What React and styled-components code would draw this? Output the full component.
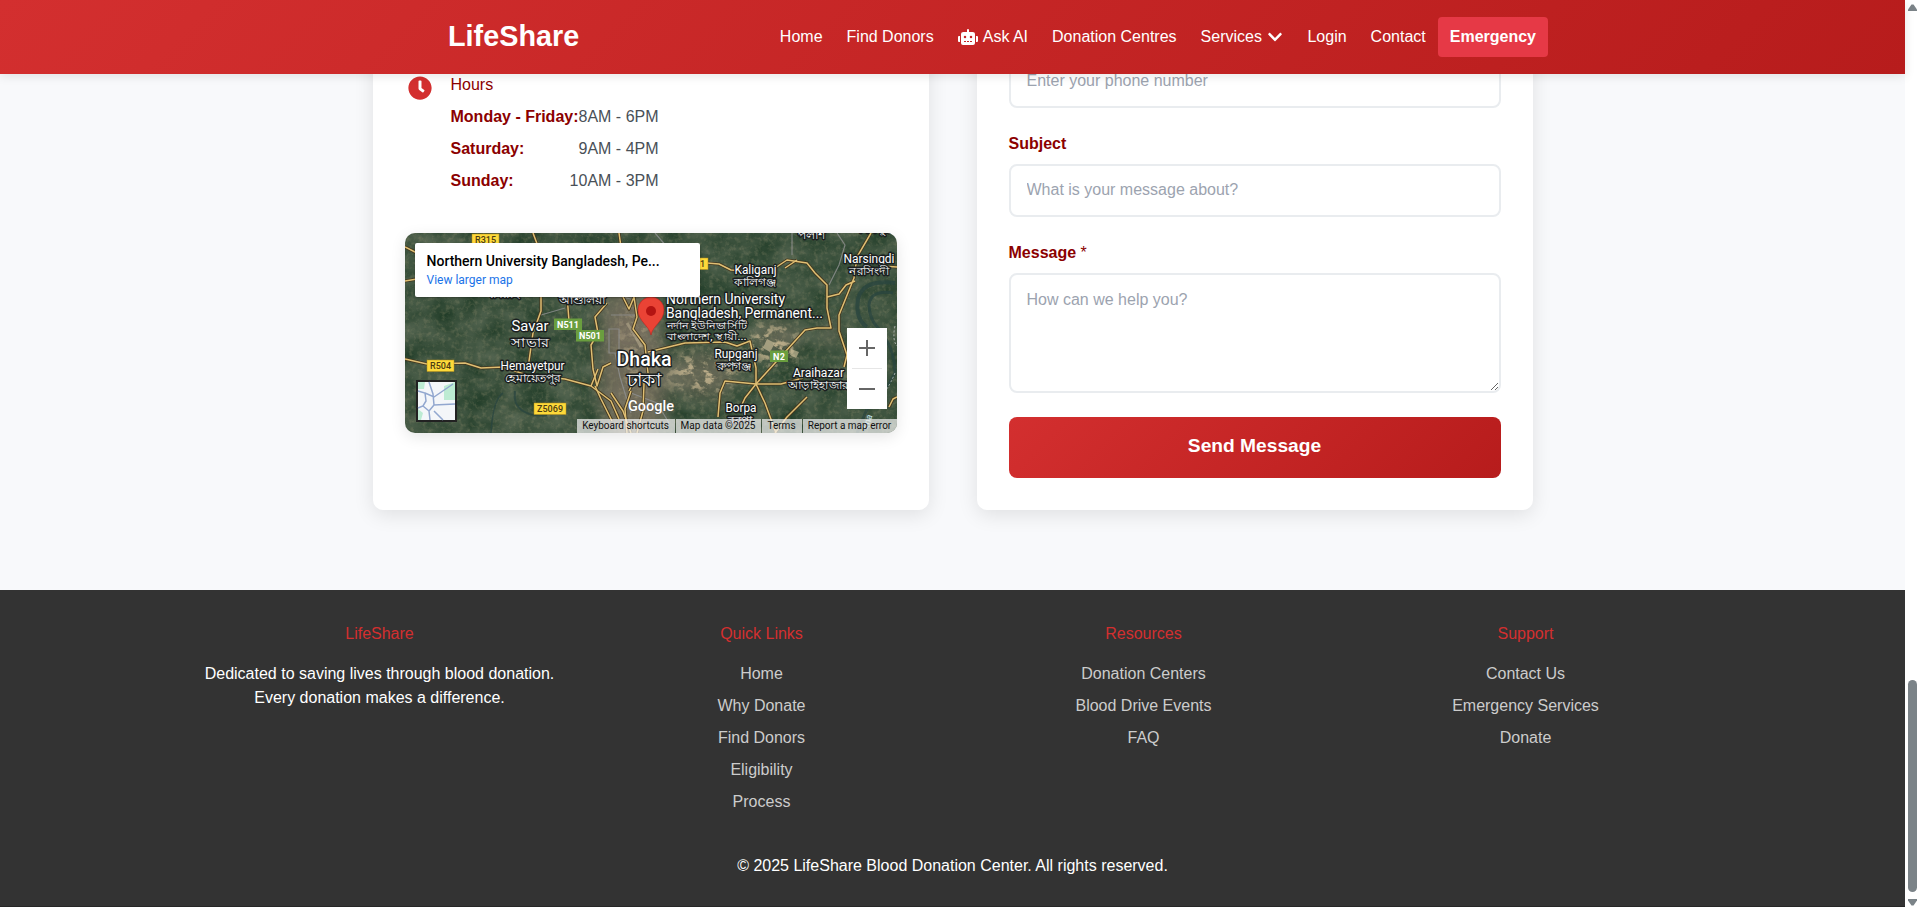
import React from "react";
import styled, { createGlobalStyle } from "styled-components";
import { FaClock, FaChevronDown, FaRobot } from "react-icons/fa";

const GlobalStyle = createGlobalStyle`
  *, *::before, *::after { box-sizing: border-box; }
  body {
    margin: 0;
    overflow: hidden;
    font-family: "Liberation Sans", Arial, sans-serif;
    font-size: 16px;
    line-height: 24px;
    background: #f8f9fa;
  }
  h3, h4, p, ul { margin: 0; padding: 0; font-weight: 400; font-size: 16px; }
  ul { list-style: none; }
  a { color: inherit; text-decoration: none; }
`;

const Screen = styled.div`
  display: flex;
  height: 907px;
  overflow: hidden;
`;

const Page = styled.div`
  display: flex;
  flex-direction: column;
  flex: 1;
  min-width: 0;
  background: #f8f9fb;
`;

const Header = styled.header`
  position: relative;
  z-index: 2;
  flex: none;
  display: flex;
  justify-content: space-between;
  align-items: center;
  height: 74px;
  padding: 0 357px 0 448px;
  color: #fff;
  background: linear-gradient(135deg, #d32f2f, #b71c1c);
  box-shadow: 0 2px 10px rgba(0, 0, 0, 0.1);
`;

const Logo = styled.a`
  font-size: 28.8px;
  line-height: 40px;
  font-weight: 700;
  padding-bottom: 2px;
`;

const Nav = styled.nav`
  display: flex;
  align-items: center;
`;

const NavLink = styled.a`
  display: flex;
  align-items: center;
  gap: ${(p) => p.$gap || 0}px;
  padding: 8px 12px;
  border-radius: 4px;
  white-space: nowrap;
  font-weight: ${(p) => (p.$emergency ? 700 : 400)};
  background: ${(p) => (p.$emergency ? "#e63946" : "transparent")};
`;

const Columns = styled.main`
  flex: none;
  display: grid;
  grid-template-columns: 556px 556px;
  gap: 48px;
  justify-content: center;
  margin-top: -40px;
  height: 476px;
`;

const Card = styled.section`
  padding: ${(p) => p.$top}px 32px 32px;
  background: #fff;
  border-radius: 10px;
  box-shadow: 0 5px 20px rgba(0, 0, 0, 0.1);
`;

const InfoItem = styled.div`
  display: flex;
  gap: 19px;
  padding-left: 3px;
`;

const InfoIcon = styled.div`
  padding-top: 3px;
  color: #d32f2f;
  svg { display: block; }
`;

const InfoTitle = styled.h4`
  color: #8b0000;
  margin-bottom: 8px;
`;

const HourRow = styled.li`
  display: flex;
  justify-content: space-between;
  margin-bottom: 8px;
  color: #495057;
  strong { color: #8b0000; }
`;

const MapFrame = styled.div`
  position: relative;
  margin-top: 32px;
  height: 200px;
  border-radius: 10px;
  overflow: hidden;
  font-family: Roboto, sans-serif;
  > svg { display: block; }
`;

const MapShadow = styled.div`
  border-radius: 10px;
  box-shadow: 0 4px 15px rgba(0, 0, 0, 0.1);
`;

const PlaceCard = styled.div`
  position: absolute;
  left: 10px;
  top: 10px;
  width: 285px;
  height: 54px;
  padding: 9px 12px;
  border-radius: 2px;
  background: #fff;
  box-shadow: 0 1px 2px rgba(0, 0, 0, 0.3);
  color: #000;
  font-size: 14px;
  font-weight: 500;
  line-height: 19px;
  white-space: nowrap;
  a { display: block; color: #1a73e8; font-size: 12px; font-weight: 400; line-height: 19px; }
`;

const ZoomControl = styled.div`
  position: absolute;
  right: 10px;
  top: 95px;
  width: 40px;
  height: 81px;
  background: #fff;
  svg { display: block; }
`;

const Attribution = styled.div`
  position: absolute;
  right: 0;
  bottom: 0;
  display: flex;
  gap: 1px;
  height: 14px;
`;

const AttributionItem = styled.span`
  width: ${(p) => p.$w}px;
  text-align: center;
  font-size: 10px;
  line-height: 14px;
  color: #111;
  white-space: nowrap;
  background: rgba(245, 245, 245, 0.7);
`;

const Field = styled.label`
  display: block;
  margin-bottom: 24px;
  color: #8b0000;
  font-weight: 700;
  span { font-weight: 400; }
`;

const Control = styled.input`
  display: block;
  width: 100%;
  height: ${(p) => p.$h || 53}px;
  margin-top: ${(p) => (p.$bare ? 0 : 8)}px;
  padding: ${(p) => (p.$h ? 13 : 12)}px 16px 14px;
  border: 2px solid #e9ecef;
  border-radius: 8px;
  background: #fff;
  font: 400 16px/24px "Liberation Sans", Arial, sans-serif;
  resize: vertical;
  &::placeholder { color: #9ca3af; opacity: 1; }
`;

const SubmitButton = styled.button`
  display: block;
  width: 100%;
  height: 61px;
  padding: 0 0 3px;
  border: 0;
  border-radius: 8px;
  color: #fff;
  font: 700 19.2px/28px "Liberation Sans", Arial, sans-serif;
  background: linear-gradient(135deg, #d32f2f, #b71c1c);
`;

const Footer = styled.footer`
  margin-top: 80px;
  flex: 1;
  padding-top: 32px;
  text-align: center;
  color: #fff;
  background: #333;
  border-bottom: 1px solid #262626;
`;

const FooterGrid = styled.div`
  display: grid;
  grid-template-columns: repeat(4, 350px);
  justify-content: center;
  gap: 32px;
`;

const FooterTitle = styled.h3`
  margin-bottom: 16px;
  color: #d32f2f;
`;

const FooterLink = styled.li`
  margin-bottom: 8px;
  color: #ccc;
`;

const Copyright = styled.p`
  margin-top: 32px;
`;

const Scrollbar = styled.div`
  flex: none;
  width: 14px;
  background: #fff;
  display: flex;
  flex-direction: column;
  align-items: center;
  padding: 4px 1px 1px 2px;
`;

const Thumb = styled.div`
  width: 9px;
  height: 212px;
  margin: auto 0 7px;
  border-radius: 5px;
  background: #7b8388;
`;

const roads = [
  "M128 0 L134 16 L136 40 L136 78 L128 100 L124 128 L124 138",
  "M0 14 L12 20 M0 48 L12 46",
  "M0 126 L22 131 L60 130 L76 135 L98 134 L125 143 L160 146 L186 153 L206 168 L214 186",
  "M162 62 L164 88 M214 0 L216 14",
  "M218 64 L224 76 L229 64 L232 84 L228 96 L240 112 L243 140",
  "M202 70 L190 84 L193 100 L186 112 L188 136 L192 153 L198 134 L206 130",
  "M190 153 L196 166 L207 188 M186 153 L193 136 M206 160 L218 178 L226 200",
  "M224 158 L230 146 L239 150 L238 178 L232 200 M222 200 L220 176 L226 158",
  "M243 119 L280 110 L320 109 L332 113 L345 108 L351 135 L351 151",
  "M302 30 L314 31 L326 37 L342 38 M370 35 L382 27 L402 30 L410 40 L422 52 L422 75 L426 95 L412 95 L400 97 L351 151",
  "M422 64 L434 61 L441 52 L450 48 M466 0 L452 24 L449 45 L434 82 L434 98 L442 122 L439 134",
  "M313 184 L315 160 L320 148 L351 151 L376 151 L398 145 M351 151 L340 165 L334 178",
  "M351 151 L360 170 L371 200 M402 164 L382 184 L370 200 M442 144 L470 150 M484 174 L488 166 L492 164",
  "M380 35 L392 27 M476 33 L492 34",
];

const minorRoads = [
  "M136 82 L160 75 M206 82 L232 82 M204 96 L214 96 L214 120 L204 120 Z M210 120 L215 144 L226 180",
  "M387 0 L387 22 M432 0 L440 12 L434 32 L424 52 M250 0 L262 14 M226 160 L252 170 L264 190 M217 64 L230 67",
];

const labels = [
  { t: "Savar", x: 125, y: 98, s: 14, w: 37 },
  { t: "সাভার", x: 125, y: 114, s: 13, w: 38 },
  { t: "Hemayetpur", x: 127.5, y: 137, s: 12, w: 64 },
  { t: "হেমায়েতপুর", x: 128, y: 149, s: 11, w: 56 },
  { t: "Dhaka", x: 239, y: 133, s: 20, w: 55, b: 500 },
  { t: "ঢাকা", x: 239, y: 153, s: 18, w: 35 },
  { t: "Kaliganj", x: 350.5, y: 41, s: 12, w: 42 },
  { t: "কালিগঞ্জ", x: 350, y: 53, s: 11, w: 42 },
  { t: "Narsingdi", x: 464, y: 30, s: 12, w: 51 },
  { t: "নরসিংদী", x: 464, y: 42, s: 11, w: 40 },
  { t: "Rupganj", x: 331, y: 125, s: 12, w: 43 },
  { t: "রুপগঞ্জ", x: 329, y: 137, s: 11, w: 35 },
  { t: "Araihazar", x: 413.5, y: 144, s: 12, w: 51 },
  { t: "আড়াইহাজার", x: 413, y: 156, s: 11, w: 61 },
  { t: "Borpa", x: 336, y: 179, s: 12, w: 31 },
  { t: "বরপা", x: 335, y: 191, s: 11, w: 24 },
  { t: "Northern University", x: 320.5, y: 71, s: 14, w: 119 },
  { t: "Bangladesh, Permanent...", x: 339.5, y: 85, s: 14, w: 157 },
  { t: "নর্দান ইউনিভার্সিটি", x: 301.5, y: 95.5, s: 10, w: 80 },
  { t: "বাংলাদেশ, স্থায়ী...", x: 301.5, y: 107, s: 10, w: 80 },
  { t: "আশুলিয়া", x: 177, y: 71, s: 11, w: 47 },
  { t: "ধামরাই", x: 98, y: 65, s: 11, w: 33 },
  { t: "পলাশ", x: 407, y: 6, s: 11, w: 28 },
  { t: "শিবপুর", x: 470, y: 0, s: 11, w: 32 },
];

const shields = [
  { t: "R315", x: 67, y: 1, w: 27 },
  { t: "R504", x: 22, y: 127, w: 27 },
  { t: "Z5069", x: 129, y: 170, w: 32 },
  { t: "R301", x: 276, y: 25, w: 27 },
  { t: "N511", x: 149, y: 85.5, w: 28, green: true },
  { t: "N501", x: 171, y: 97, w: 28, green: true },
  { t: "N2", x: 365, y: 117.5, w: 18, green: true },
];

function SatelliteMap() {
  return (
    <svg width="492" height="200" viewBox="0 0 492 200">
      <defs>
        <filter id="fields" x="0" y="0" width="100%" height="100%" colorInterpolationFilters="sRGB">
          <feTurbulence type="fractalNoise" baseFrequency="0.035 0.045" numOctaves="5" seed="8" />
          <feColorMatrix values="0.28 0 0 0 0.1  0.22 0 0 0 0.215  0.22 0 0 0 0.135  0 0 0 0 1" />
        </filter>
        <filter id="grain" x="0" y="0" width="100%" height="100%" colorInterpolationFilters="sRGB">
          <feTurbulence type="fractalNoise" baseFrequency="0.22" numOctaves="3" seed="3" />
          <feColorMatrix values="0 0 0 0 0.6  0 0 0 0 0.58  0 0 0 0 0.45  3 0 0 0 -1.4" />
        </filter>
        <filter id="soft" x="-50%" y="-50%" width="200%" height="200%">
          <feGaussianBlur stdDeviation="9" />
        </filter>
        <filter id="sand" x="-20%" y="-20%" width="140%" height="140%" colorInterpolationFilters="sRGB">
          <feTurbulence type="fractalNoise" baseFrequency="0.1 0.14" numOctaves="4" seed="12" />
          <feColorMatrix values="0 0 0 0 0.8  0 0 0 0 0.73  0 0 0 0 0.58  6 0 0 0 -3.1" />
          <feComposite in2="SourceAlpha" operator="in" />
        </filter>
      </defs>
      <rect width="492" height="200" filter="url(#fields)" />
      <g filter="url(#soft)" fill="#7a6f60">
        <ellipse cx="228" cy="145" rx="34" ry="75" opacity="0.8" />
        <ellipse cx="220" cy="80" rx="28" ry="34" opacity="0.6" />
        <ellipse cx="298" cy="142" rx="34" ry="24" opacity="0.6" />
        <ellipse cx="372" cy="105" rx="24" ry="20" opacity="0.5" />
        <ellipse cx="426" cy="100" rx="12" ry="12" opacity="0.5" />
      </g>
      <rect width="492" height="200" filter="url(#grain)" opacity="0.28" />
      <g filter="url(#sand)" opacity="0.85">
        <g filter="url(#soft)">
          <ellipse cx="230" cy="120" rx="16" ry="50" opacity="0.5" />
          <ellipse cx="298" cy="140" rx="34" ry="20" />
          <ellipse cx="368" cy="112" rx="26" ry="22" />
        </g>
      </g>
      <path d="M222 90 q8 12 14 24" stroke="#b3a68a" strokeWidth="3" fill="none" opacity="0.6" />
      <path d="M362 106 l8 4 l-5 9 l-7 -4 Z M386 116 l8 3 l-3 6 l-6 -3 Z" fill="#d5c6a0" opacity="0.6" />
      <g fill="none" stroke="#28443f" opacity="0.75">
        <path d="M110 158 Q108 172 118 178 Q128 184 142 182" strokeWidth="2" />
        <path d="M490 50 Q458 46 453 66 Q450 86 462 94" strokeWidth="4" />
        <path d="M488 60 Q466 56 464 72 Q464 86 474 96 Q490 116 490 140 Q480 160 462 176 L452 200" strokeWidth="3" />
        <path d="M86 200 Q88 166 98 160" strokeWidth="1.5" />
      </g>
      <path d="M490 93 q-3 14 2 20 M490 140 q-8 20 -20 28" fill="none" stroke="#c8ccc8" strokeDasharray="2 2" strokeWidth="0.8" />
      {minorRoads.map((d) => (
        <path key={d} d={d} fill="none" stroke="#8f9090" strokeWidth="1.2" opacity="0.8" />
      ))}
      {roads.map((d) => (
        <path key={d} d={d} fill="none" stroke="#43371f" strokeWidth="3.2" strokeLinejoin="round" />
      ))}
      {roads.map((d) => (
        <path key={d} d={d} fill="none" stroke="#dfbf73" strokeWidth="1.5" strokeLinejoin="round" />
      ))}
      {shields.map((s) => (
        <g key={s.t}>
          <rect x={s.x} y={s.y} width={s.w} height="11.5" fill={s.green ? "#6a9e3f" : "#fdd93a"} stroke={s.green ? "none" : "#b58d1b"} strokeWidth="0.5" />
          <text x={s.x + s.w / 2} y={s.y + 9} textAnchor="middle" fontSize="9" fontWeight={s.green ? 700 : 500} textLength={s.w - 6} fill={s.green ? "#fff" : "#4b3b12"}>{s.t}</text>
        </g>
      ))}
      {labels.map((l) => (
        <text key={l.t} x={l.x} y={l.y} textAnchor="middle" fontSize={l.s} fontWeight={l.b || 400} textLength={l.w} lengthAdjust="spacingAndGlyphs" fill="#fff" stroke="#1b1f20" strokeWidth="2.8" strokeLinejoin="round" paintOrder="stroke">{l.t}</text>
      ))}
      <text transform="rotate(-72 462 190)" x="456" y="193" fontSize="9" fill="#bfe0ee">হna</text>
      <path d="M246 102 C244.500 93 233 88 233 77 A13 13 0 0 1 259 77 C259 88 247.500 93 246 102 Z" fill="#ea4335" stroke="#c5221f" strokeWidth="0.6" />
      <circle cx="246" cy="78" r="5" fill="#b31412" />
      <text x="246" y="178" textAnchor="middle" fontSize="15" fontWeight="500" textLength="46" lengthAdjust="spacingAndGlyphs" fill="#fff" stroke="#55534c" strokeWidth="1" paintOrder="stroke" fontFamily="Roboto, sans-serif">Google</text>
      <g>
        <rect x="12" y="148" width="39" height="40" fill="#f4f6f9" stroke="#222" strokeWidth="2" />
        <path d="M39 153 L50 149 V167 H39 Z M13 149 H20 L19 156 H13 Z M13 176 L18 180 L16 187 H13 Z" fill="#bdebd3" />
        <path d="M13 158 L20 160 L21 168 L18 173 L13 175 M24 149 L28 161 L29 172 L50 171 M20 160 L29 164 L48 151 M18 173 L24 178 L29 172 M24 178 L25 187 M38 187 L29 178" fill="none" stroke="#92a7cf" strokeWidth="1.5" />
      </g>
    </svg>
  );
}

const hours = [
  ["Monday - Friday:", "8AM - 6PM"],
  ["Saturday:", "9AM - 4PM"],
  ["Sunday:", "10AM - 3PM"],
];

const footerColumns = [
  ["Quick Links", ["Home", "Why Donate", "Find Donors", "Eligibility", "Process"]],
  ["Resources", ["Donation Centers", "Blood Drive Events", "FAQ"]],
  ["Support", ["Contact Us", "Emergency Services", "Donate"]],
];

export default function App() {
  return (
    <Screen>
      <GlobalStyle />
      <Page>
        <Header>
          <Logo>LifeShare</Logo>
          <Nav>
            <NavLink>Home</NavLink>
            <NavLink>Find Donors</NavLink>
            <NavLink $gap={5}>
              <FaRobot style={{ width: 20, height: 16 }} />
              Ask AI
            </NavLink>
            <NavLink>Donation Centres</NavLink>
            <NavLink $gap={5.5}>
              Services
              <FaChevronDown style={{ width: 16, height: 16 }} />
            </NavLink>
            <NavLink>Login</NavLink>
            <NavLink>Contact</NavLink>
            <NavLink $emergency>Emergency</NavLink>
          </Nav>
        </Header>

        <Columns>
          <Card $top={39}>
            <InfoItem>
              <InfoIcon><FaClock size={24} /></InfoIcon>
              <div>
                <InfoTitle>Hours</InfoTitle>
                <ul>
                  {hours.map(([day, time]) => (
                    <HourRow key={day}><strong>{day}</strong><span>{time}</span></HourRow>
                  ))}
                </ul>
              </div>
            </InfoItem>
            <MapShadow>
              <MapFrame>
                <SatelliteMap />
                <PlaceCard>
                  Northern University Bangladesh, Pe...
                  <a>View larger map</a>
                </PlaceCard>
                <ZoomControl>
                  <svg width="40" height="81" viewBox="0 0 40 81" fill="none" stroke="#666" strokeWidth="2">
                    <path d="M12 20H28 M20 12V28 M12 61H28" />
                    <path d="M5 40.500H35" stroke="#e6e6e6" strokeWidth="1" />
                  </svg>
                </ZoomControl>
                <Attribution>
                  <AttributionItem $w={98}>Keyboard shortcuts</AttributionItem>
                  <AttributionItem $w={85}>Map data ©2025</AttributionItem>
                  <AttributionItem $w={40}>Terms</AttributionItem>
                  <AttributionItem $w={94}>Report a map error</AttributionItem>
                </Attribution>
              </MapFrame>
            </MapShadow>
          </Card>

          <Card $top={21}>
            <Field><Control $bare placeholder="Enter your phone number" /></Field>
            <Field>Subject<Control placeholder="What is your message about?" /></Field>
            <Field>Message <span>*</span><Control as="textarea" $h={120} placeholder="How can we help you?" /></Field>
            <SubmitButton>Send Message</SubmitButton>
          </Card>
        </Columns>

        <Footer>
          <FooterGrid>
            <div>
              <FooterTitle>LifeShare</FooterTitle>
              <p>Dedicated to saving lives through blood donation. Every donation makes a difference.</p>
            </div>
            {footerColumns.map(([title, links]) => (
              <div key={title}>
                <FooterTitle>{title}</FooterTitle>
                <ul>{links.map((l) => <FooterLink key={l}><a>{l}</a></FooterLink>)}</ul>
              </div>
            ))}
          </FooterGrid>
          <Copyright>© 2025 LifeShare Blood Donation Center. All rights reserved.</Copyright>
        </Footer>
      </Page>

      <Scrollbar>
        <svg width="9" height="7" viewBox="0 0 9 7" fill="#7b8388"><path d="M3.500 .5h2L9 5.500V7H0V5.500Z" /></svg>
        <Thumb />
        <svg width="9" height="7" viewBox="0 0 9 7" fill="#7b8388"><path d="M0 0h9v1.500L5.500 6.500h-2L0 1.500Z" /></svg>
      </Scrollbar>
    </Screen>
  );
}
